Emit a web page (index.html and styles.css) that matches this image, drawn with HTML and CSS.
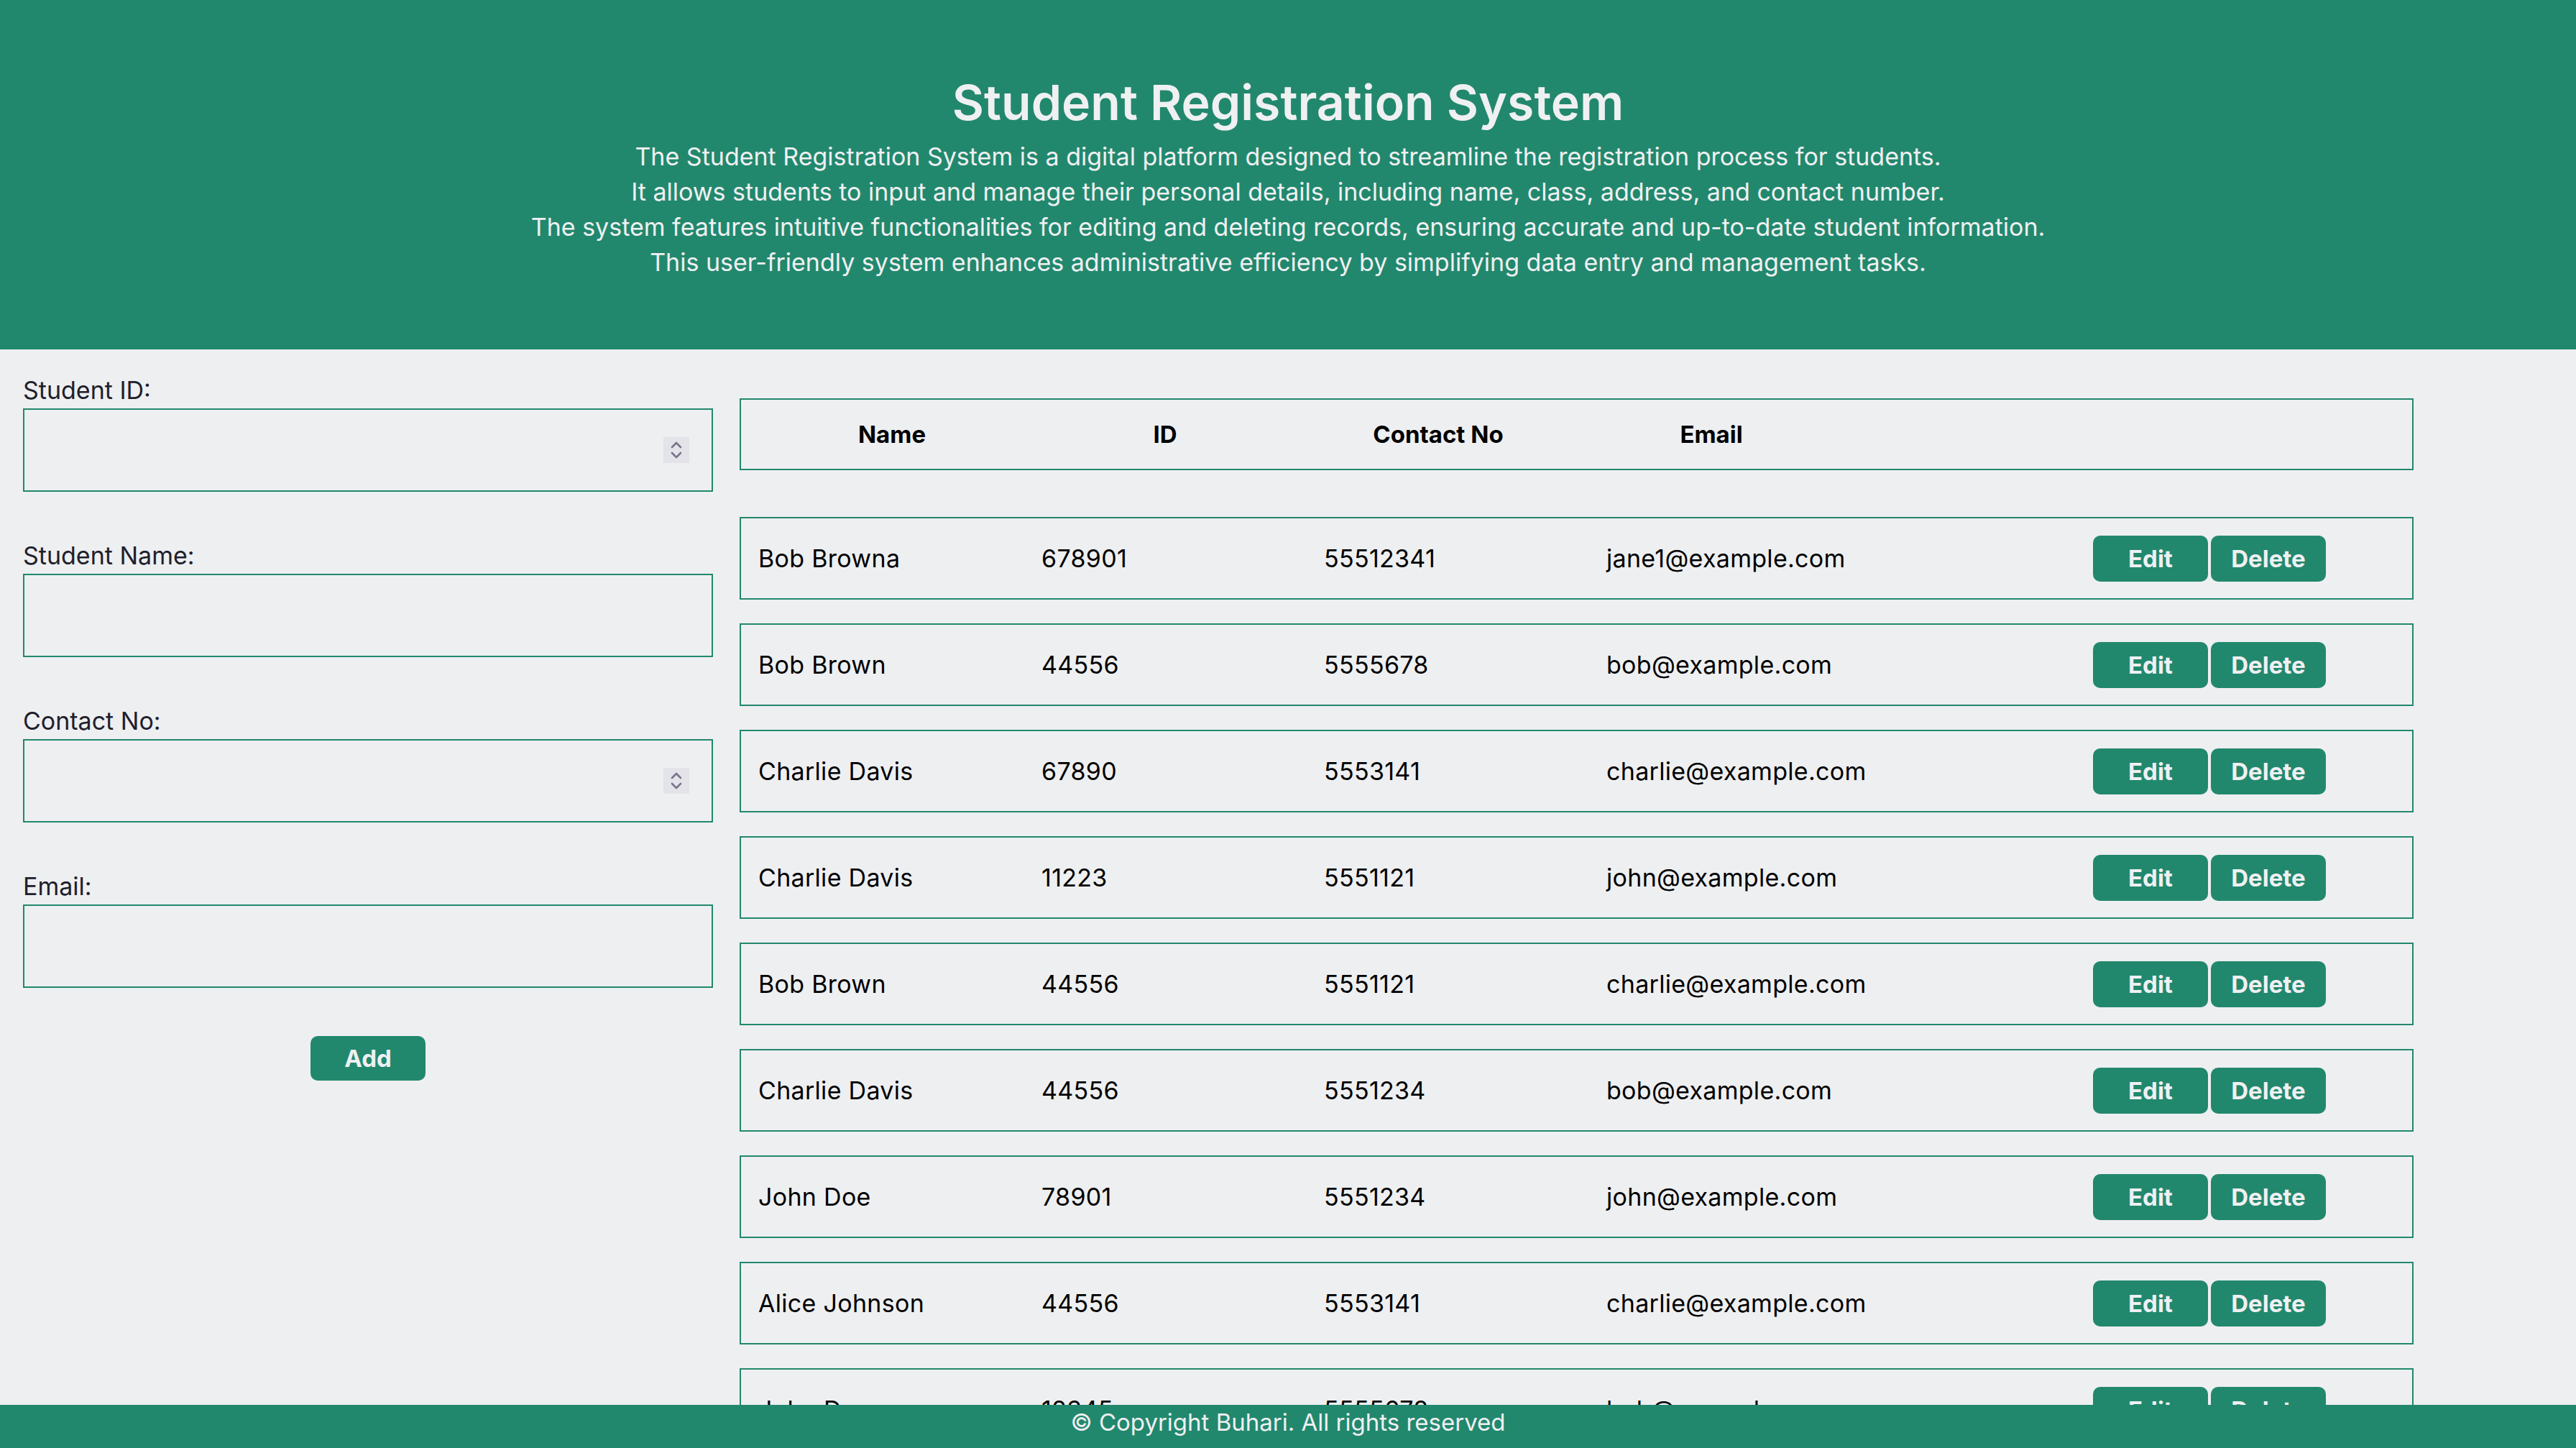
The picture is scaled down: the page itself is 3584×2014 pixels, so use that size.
FILE: index.html
```html
<!DOCTYPE html>
<html lang="en">
<head>
<meta charset="utf-8">
<title>Student Registration System</title>
<link rel="stylesheet" href="styles.css">
</head>
<body>
<header class="hero">
  <h1 class="hero-title">Student Registration System</h1>
  <p class="hero-text">The Student Registration System is a digital platform designed to streamline the registration process for students.<br>It allows students to input and manage their personal details, including name, class, address, and contact number.<br>The system features intuitive functionalities for editing and deleting records, ensuring accurate and up-to-date student information.<br>This user-friendly system enhances administrative efficiency by simplifying data entry and management tasks.</p>
</header>

<main class="content">
  <form class="student-form">
    <div class="field">
      <label class="field-label" for="sid">Student ID:</label>
      <div class="input-wrap">
        <input class="field-input" id="sid" type="text">
        <span class="spinner"><svg width="36" height="36" viewBox="0 0 36 36"><polyline points="12,14 18,8 24,14" /><polyline points="12,22 18,28 24,22" /></svg></span>
      </div>
    </div>
    <div class="field">
      <label class="field-label" for="sname">Student Name:</label>
      <div class="input-wrap">
        <input class="field-input" id="sname" type="text">
      </div>
    </div>
    <div class="field">
      <label class="field-label" for="scontact">Contact No:</label>
      <div class="input-wrap">
        <input class="field-input" id="scontact" type="text">
        <span class="spinner"><svg width="36" height="36" viewBox="0 0 36 36"><polyline points="12,14 18,8 24,14" /><polyline points="12,22 18,28 24,22" /></svg></span>
      </div>
    </div>
    <div class="field field-last">
      <label class="field-label" for="semail">Email:</label>
      <div class="input-wrap">
        <input class="field-input" id="semail" type="text">
      </div>
    </div>
    <div class="form-actions">
      <button type="button" class="btn btn-add">Add</button>
    </div>
  </form>

  <section class="records">
    <div class="table-head">
      <span class="th">Name</span>
      <span class="th">ID</span>
      <span class="th">Contact No</span>
      <span class="th">Email</span>
    </div>
    <div class="rows">
      <div class="row"><span>Bob Browna</span><span>678901</span><span>55512341</span><span>jane1@example.com</span><span class="actions"><button class="btn btn-sm">Edit</button><button class="btn btn-sm">Delete</button></span></div>
      <div class="row"><span>Bob Brown</span><span>44556</span><span>5555678</span><span>bob@example.com</span><span class="actions"><button class="btn btn-sm">Edit</button><button class="btn btn-sm">Delete</button></span></div>
      <div class="row"><span>Charlie Davis</span><span>67890</span><span>5553141</span><span>charlie@example.com</span><span class="actions"><button class="btn btn-sm">Edit</button><button class="btn btn-sm">Delete</button></span></div>
      <div class="row"><span>Charlie Davis</span><span>11223</span><span>5551121</span><span>john@example.com</span><span class="actions"><button class="btn btn-sm">Edit</button><button class="btn btn-sm">Delete</button></span></div>
      <div class="row"><span>Bob Brown</span><span>44556</span><span>5551121</span><span>charlie@example.com</span><span class="actions"><button class="btn btn-sm">Edit</button><button class="btn btn-sm">Delete</button></span></div>
      <div class="row"><span>Charlie Davis</span><span>44556</span><span>5551234</span><span>bob@example.com</span><span class="actions"><button class="btn btn-sm">Edit</button><button class="btn btn-sm">Delete</button></span></div>
      <div class="row"><span>John Doe</span><span>78901</span><span>5551234</span><span>john@example.com</span><span class="actions"><button class="btn btn-sm">Edit</button><button class="btn btn-sm">Delete</button></span></div>
      <div class="row"><span>Alice Johnson</span><span>44556</span><span>5553141</span><span>charlie@example.com</span><span class="actions"><button class="btn btn-sm">Edit</button><button class="btn btn-sm">Delete</button></span></div>
      <div class="row"><span>John Doe</span><span>12345</span><span>5555678</span><span>bob@example.com</span><span class="actions"><button class="btn btn-sm">Edit</button><button class="btn btn-sm">Delete</button></span></div>
    </div>
  </section>
</main>

<footer class="site-footer">© Copyright Buhari. All rights reserved</footer>
</body>
</html>
```

FILE: styles.css
```css
html, body {
  margin: 0;
  padding: 0;
  overflow: hidden;
}

body {
  background: #eeeff1;
  font-family: "Inter", "Open Sans", "Liberation Sans", sans-serif;
  color: #000;
}

.hero {
  background: #22886d;
  color: #eff0f2;
  text-align: center;
  padding: 91px 0 97px;
}

.hero-title {
  margin: 0;
  font-size: 68px;
  font-weight: 600;
  line-height: 102px;
}

.hero-text {
  margin: 0;
  font-size: 34px;
  line-height: 49px;
  font-weight: 400;
}

.content {
  display: flex;
  align-items: flex-start;
}

.student-form {
  width: 960px;
  margin-left: 32px;
  padding-top: 32px;
}

.field {
  margin-bottom: 64px;
}

.field-last {
  margin-bottom: 67px;
}

.field-label {
  display: block;
  font-size: 34px;
  line-height: 49px;
  color: #20202c;
}

.input-wrap {
  position: relative;
  margin-top: 1px;
}

.field-input {
  display: block;
  width: 960px;
  height: 116px;
  box-sizing: border-box;
  border: 2px solid #22886d;
  background: transparent;
  margin: 0;
  padding: 0 30px;
  font-family: inherit;
  font-size: 32px;
  outline: none;
}

.spinner {
  position: absolute;
  right: 33px;
  top: 40px;
  width: 36px;
  height: 36px;
  background: #e3e3e9;
}

.spinner svg {
  display: block;
}

.spinner polyline {
  fill: none;
  stroke: #75768a;
  stroke-width: 2.6;
  stroke-linecap: round;
  stroke-linejoin: round;
}

.form-actions {
  display: flex;
  justify-content: center;
}

.btn {
  background: #22886d;
  color: #eff0f2;
  border: none;
  border-radius: 10px;
  font-family: inherit;
  font-weight: 700;
  font-size: 33px;
  padding: 0;
  cursor: pointer;
}

.btn-add {
  width: 160px;
  height: 62px;
}

.records {
  width: 2329px;
  margin-left: 37px;
  padding-top: 68px;
}

.table-head {
  display: flex;
  height: 100px;
  box-sizing: border-box;
  border: 2px solid #22886d;
  padding-left: 20px;
  align-items: center;
}

.th {
  width: 380px;
  text-align: center;
  font-weight: 700;
  font-size: 33px;
  line-height: 49px;
}

.rows {
  display: flex;
  flex-direction: column;
  gap: 33px;
  margin-top: 65px;
}

.row {
  display: grid;
  grid-template-columns: 394px 393px 393px 677px auto;
  align-items: center;
  height: 115px;
  box-sizing: border-box;
  border: 2px solid #22886d;
  padding-left: 24px;
  font-size: 34px;
  letter-spacing: 0.3px;
  line-height: 49px;
}

.actions {
  display: flex;
  gap: 4px;
  letter-spacing: 0;
}

.btn-sm {
  width: 160px;
  height: 64px;
}

.site-footer {
  position: fixed;
  left: 0;
  right: 0;
  bottom: 0;
  height: 60px;
  background: #22886d;
  color: #eff0f2;
  text-align: center;
  font-size: 33px;
  line-height: 49px;
}
```
